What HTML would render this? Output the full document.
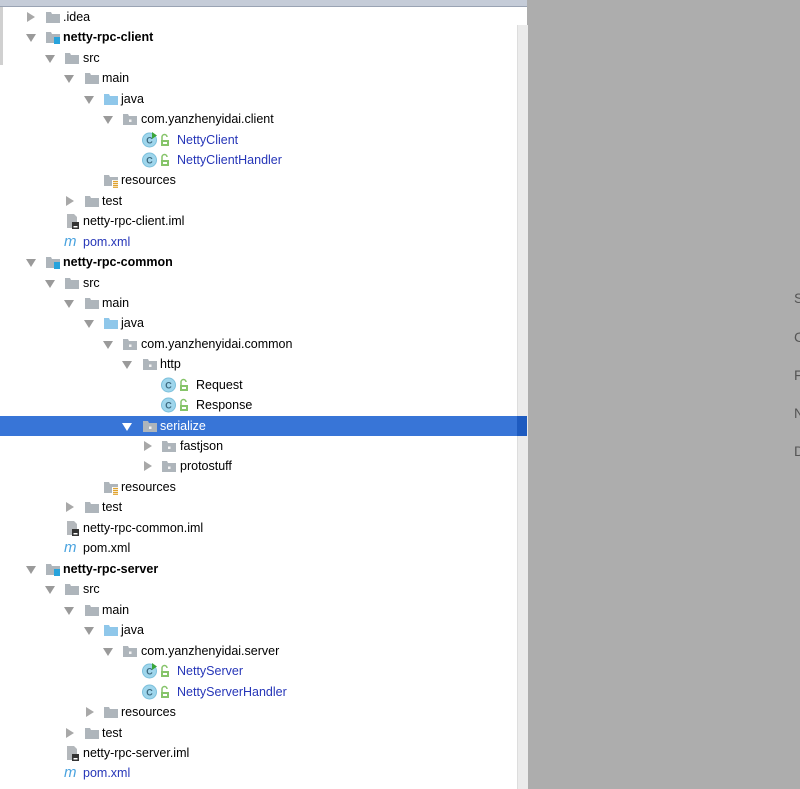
<!DOCTYPE html>
<html><head><meta charset="utf-8"><style>
body{margin:0;width:800px;height:789px;overflow:hidden;background:#adadad;font-family:"Liberation Sans","Noto Sans CJK SC",sans-serif;}
#p{position:absolute;left:0;top:0;width:527px;height:789px;background:#fff;}
#top{position:absolute;left:0;top:0;width:527px;height:6px;background:#c5ccd8;border-bottom:1px solid #9aa3b3;}
#sb{position:absolute;left:517px;top:25px;width:10px;height:764px;background:#ebebeb;border-left:1px solid #ddd;}
#lb{position:absolute;left:0;top:7px;width:3px;height:58px;background:#d0d0d0;}
.r{position:absolute;left:0;width:527px;height:20px;font-size:12.5px;line-height:20px;color:#000;white-space:nowrap;}
.r.sel{background:#3875d7;color:#fff;}
.r.sel::after{content:"";position:absolute;left:517px;top:0;width:10px;height:20px;background:#1e5bc0;}
.i{position:absolute;top:0;height:20px;}
.a{position:absolute;top:6px;width:0;height:0;}
.ad{border-left:5px solid transparent;border-right:5px solid transparent;border-top:8px solid #9a9a9a;top:7px;}
.ar{border-top:5px solid transparent;border-bottom:5px solid transparent;border-left:8px solid #a8a8a8;top:5px;}
.sel .ad{border-top-color:#fff;}
.ic{position:absolute;top:2px;width:16px;height:16px;}
.t{position:absolute;top:0;}
.b{font-weight:bold;}
.bl{color:#2636b8;}
.sx{position:absolute;left:794px;font-size:14px;color:#555;}
</style></head><body>
<svg width="0" height="0" style="position:absolute">
<defs>
<symbol id="fo" viewBox="0 0 16 16"><path d="M1 3h5l1 2h8v9H1z" fill="#aeb5bb"/></symbol>
<symbol id="fj" viewBox="0 0 16 16"><path d="M1 3h5l1 2h8v9H1z" fill="#8fc7ea"/></symbol>
<symbol id="fp" viewBox="0 0 16 16"><path d="M1 3h5l1 2h8v9H1z" fill="#aeb5bb"/><rect x="7" y="8.5" width="2.5" height="2.5" fill="#f4f4f4"/></symbol>
<symbol id="fm" viewBox="0 0 16 16"><path d="M1 3h5l1 2h8v9H1z" fill="#aeb5bb"/><rect x="9" y="8" width="6" height="7" fill="#27a3dc"/></symbol>
<symbol id="fr" viewBox="0 0 16 16"><path d="M1 3h5l1 2h8v9H1z" fill="#aeb5bb"/><rect x="9" y="8" width="7" height="8" fill="#fff"/><path d="M10 9.5h5M10 11.5h5M10 13.5h5M10 15.3h5" stroke="#e0a22d" stroke-width="1.2"/></symbol>
<symbol id="cl" viewBox="0 0 16 16"><circle cx="7.5" cy="8" r="7" fill="#9fd6ec" stroke="#7cc0dc"/><text x="7.5" y="11.5" font-size="9" font-weight="bold" text-anchor="middle" fill="#3d6a80" font-family="Liberation Sans">C</text></symbol>
<symbol id="cr" viewBox="0 0 16 16"><circle cx="7.5" cy="8" r="7" fill="#9fd6ec" stroke="#7cc0dc"/><text x="7.5" y="11.5" font-size="9" font-weight="bold" text-anchor="middle" fill="#3d6a80" font-family="Liberation Sans">C</text><path d="M10 0l5 3.5-5 3.5z" fill="#3aa63a"/></symbol>
<symbol id="lk" viewBox="0 0 16 16"><rect x="4" y="8" width="8" height="6" fill="#86c46a"/><rect x="6" y="10" width="4" height="2" fill="#fff"/><path d="M5 8V5a2.5 2.5 0 0 1 5 0" stroke="#86c46a" stroke-width="1.5" fill="none"/></symbol>
<symbol id="im" viewBox="0 0 16 16"><path d="M3 1h7l3 3v11H3z" fill="#b4b8bc"/><rect x="8" y="9" width="7" height="7" fill="#333"/><rect x="9.5" y="13" width="4" height="1.5" fill="#fff"/></symbol>
</defs></svg>
<div id="p"></div><div id="top"></div><div id="lb"></div><div id="sb"></div>

<div class="r" style="top:7px"><span class="a ar" style="left:27px"></span><svg class="ic" style="left:45px"><use href="#fo"/></svg><span class="t" style="left:63px">.idea</span></div>
<div class="r" style="top:27px"><span class="a ad" style="left:26px"></span><svg class="ic" style="left:45px"><use href="#fm"/></svg><span class="t b" style="left:63px">netty-rpc-client</span></div>
<div class="r" style="top:48px"><span class="a ad" style="left:45px"></span><svg class="ic" style="left:64px"><use href="#fo"/></svg><span class="t" style="left:83px">src</span></div>
<div class="r" style="top:68px"><span class="a ad" style="left:64px"></span><svg class="ic" style="left:84px"><use href="#fo"/></svg><span class="t" style="left:102px">main</span></div>
<div class="r" style="top:89px"><span class="a ad" style="left:84px"></span><svg class="ic" style="left:103px"><use href="#fj"/></svg><span class="t" style="left:121px">java</span></div>
<div class="r" style="top:109px"><span class="a ad" style="left:103px"></span><svg class="ic" style="left:122px"><use href="#fp"/></svg><span class="t" style="left:141px">com.yanzhenyidai.client</span></div>
<div class="r" style="top:130px"><svg class="ic" style="left:142px"><use href="#cr"/></svg><svg class="ic" style="left:157px"><use href="#lk"/></svg><span class="t bl" style="left:177px">NettyClient</span></div>
<div class="r" style="top:150px"><svg class="ic" style="left:142px"><use href="#cl"/></svg><svg class="ic" style="left:157px"><use href="#lk"/></svg><span class="t bl" style="left:177px">NettyClientHandler</span></div>
<div class="r" style="top:170px"><svg class="ic" style="left:103px"><use href="#fr"/></svg><span class="t" style="left:121px">resources</span></div>
<div class="r" style="top:191px"><span class="a ar" style="left:66px"></span><svg class="ic" style="left:84px"><use href="#fo"/></svg><span class="t" style="left:102px">test</span></div>
<div class="r" style="top:211px"><svg class="ic" style="left:64px"><use href="#im"/></svg><span class="t" style="left:83px">netty-rpc-client.iml</span></div>
<div class="r" style="top:232px"><span class="ic" style="left:64px;top:0;font-style:italic;color:#4aa3df;font-size:15px">m</span><span class="t bl" style="left:83px">pom.xml</span></div>

<div class="r" style="top:252px"><span class="a ad" style="left:26px"></span><svg class="ic" style="left:45px"><use href="#fm"/></svg><span class="t b" style="left:63px">netty-rpc-common</span></div>
<div class="r" style="top:273px"><span class="a ad" style="left:45px"></span><svg class="ic" style="left:64px"><use href="#fo"/></svg><span class="t" style="left:83px">src</span></div>
<div class="r" style="top:293px"><span class="a ad" style="left:64px"></span><svg class="ic" style="left:84px"><use href="#fo"/></svg><span class="t" style="left:102px">main</span></div>
<div class="r" style="top:313px"><span class="a ad" style="left:84px"></span><svg class="ic" style="left:103px"><use href="#fj"/></svg><span class="t" style="left:121px">java</span></div>
<div class="r" style="top:334px"><span class="a ad" style="left:103px"></span><svg class="ic" style="left:122px"><use href="#fp"/></svg><span class="t" style="left:141px">com.yanzhenyidai.common</span></div>
<div class="r" style="top:354px"><span class="a ad" style="left:122px"></span><svg class="ic" style="left:142px"><use href="#fp"/></svg><span class="t" style="left:160px">http</span></div>
<div class="r" style="top:375px"><svg class="ic" style="left:161px"><use href="#cl"/></svg><svg class="ic" style="left:176px"><use href="#lk"/></svg><span class="t" style="left:196px">Request</span></div>
<div class="r" style="top:395px"><svg class="ic" style="left:161px"><use href="#cl"/></svg><svg class="ic" style="left:176px"><use href="#lk"/></svg><span class="t" style="left:196px">Response</span></div>
<div class="r sel" style="top:416px"><span class="a ad" style="left:122px"></span><svg class="ic" style="left:142px"><use href="#fp"/></svg><span class="t" style="left:160px">serialize</span></div>
<div class="r" style="top:436px"><span class="a ar" style="left:144px"></span><svg class="ic" style="left:161px"><use href="#fp"/></svg><span class="t" style="left:180px">fastjson</span></div>
<div class="r" style="top:456px"><span class="a ar" style="left:144px"></span><svg class="ic" style="left:161px"><use href="#fp"/></svg><span class="t" style="left:180px">protostuff</span></div>
<div class="r" style="top:477px"><svg class="ic" style="left:103px"><use href="#fr"/></svg><span class="t" style="left:121px">resources</span></div>
<div class="r" style="top:497px"><span class="a ar" style="left:66px"></span><svg class="ic" style="left:84px"><use href="#fo"/></svg><span class="t" style="left:102px">test</span></div>
<div class="r" style="top:518px"><svg class="ic" style="left:64px"><use href="#im"/></svg><span class="t" style="left:83px">netty-rpc-common.iml</span></div>
<div class="r" style="top:538px"><span class="ic" style="left:64px;top:0;font-style:italic;color:#4aa3df;font-size:15px">m</span><span class="t" style="left:83px">pom.xml</span></div>

<div class="r" style="top:559px"><span class="a ad" style="left:26px"></span><svg class="ic" style="left:45px"><use href="#fm"/></svg><span class="t b" style="left:63px">netty-rpc-server</span></div>
<div class="r" style="top:579px"><span class="a ad" style="left:45px"></span><svg class="ic" style="left:64px"><use href="#fo"/></svg><span class="t" style="left:83px">src</span></div>
<div class="r" style="top:600px"><span class="a ad" style="left:64px"></span><svg class="ic" style="left:84px"><use href="#fo"/></svg><span class="t" style="left:102px">main</span></div>
<div class="r" style="top:620px"><span class="a ad" style="left:84px"></span><svg class="ic" style="left:103px"><use href="#fj"/></svg><span class="t" style="left:121px">java</span></div>
<div class="r" style="top:641px"><span class="a ad" style="left:103px"></span><svg class="ic" style="left:122px"><use href="#fp"/></svg><span class="t" style="left:141px">com.yanzhenyidai.server</span></div>
<div class="r" style="top:661px"><svg class="ic" style="left:142px"><use href="#cr"/></svg><svg class="ic" style="left:157px"><use href="#lk"/></svg><span class="t bl" style="left:177px">NettyServer</span></div>
<div class="r" style="top:682px"><svg class="ic" style="left:142px"><use href="#cl"/></svg><svg class="ic" style="left:157px"><use href="#lk"/></svg><span class="t bl" style="left:177px">NettyServerHandler</span></div>
<div class="r" style="top:702px"><span class="a ar" style="left:86px"></span><svg class="ic" style="left:103px"><use href="#fo"/></svg><span class="t" style="left:121px">resources</span></div>
<div class="r" style="top:723px"><span class="a ar" style="left:66px"></span><svg class="ic" style="left:84px"><use href="#fo"/></svg><span class="t" style="left:102px">test</span></div>
<div class="r" style="top:743px"><svg class="ic" style="left:64px"><use href="#im"/></svg><span class="t" style="left:83px">netty-rpc-server.iml</span></div>
<div class="r" style="top:763px"><span class="ic" style="left:64px;top:0;font-style:italic;color:#4aa3df;font-size:15px">m</span><span class="t bl" style="left:83px">pom.xml</span></div>

<span class="sx" style="top:290px">S</span>
<span class="sx" style="top:329px">C</span>
<span class="sx" style="top:367px">F</span>
<span class="sx" style="top:405px">N</span>
<span class="sx" style="top:443px">D</span>
</body></html>
